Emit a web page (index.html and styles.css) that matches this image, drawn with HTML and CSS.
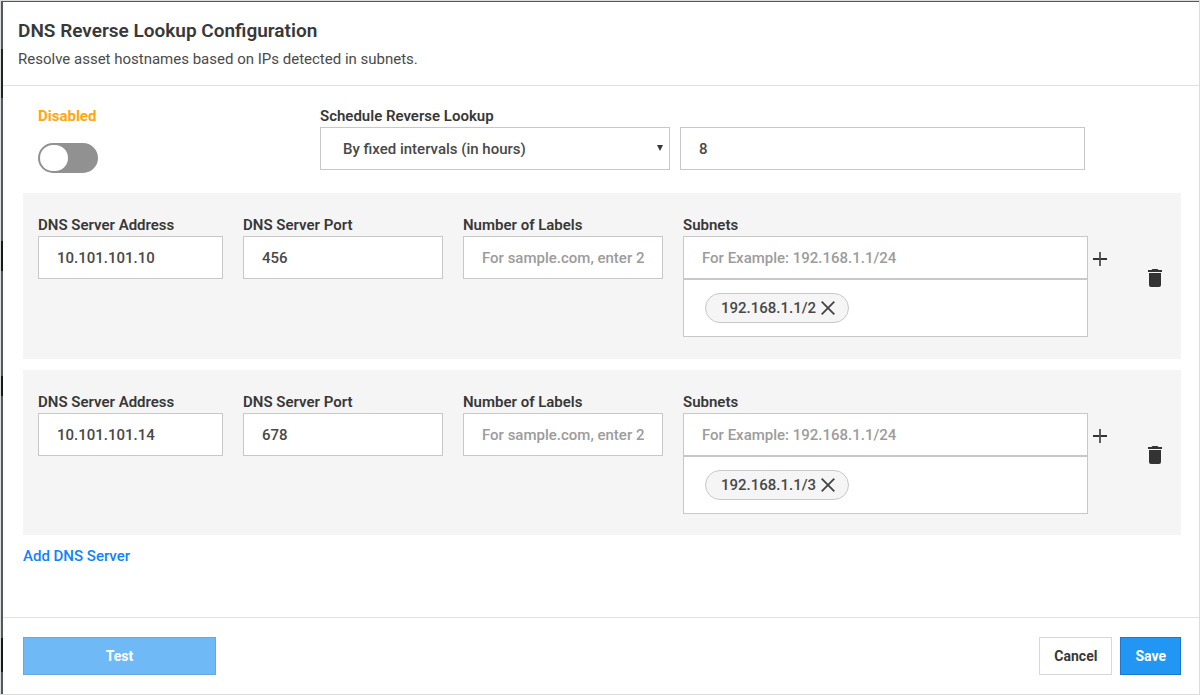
FILE: index.html
```html
<!DOCTYPE html>
<html lang="en">
<head>
<meta charset="utf-8">
<meta name="viewport" content="width=device-width, initial-scale=1">
<title>DNS Reverse Lookup Configuration</title>
<link rel="stylesheet" href="styles.css">
</head>
<body>
<svg class="sprite" aria-hidden="true">
  <symbol id="plus" viewBox="0 0 14 14"><path d="M0 7h14" stroke="#333" stroke-width="2"/><path d="M7 0v14" stroke="#4d4d4d" stroke-width="1.800"/></symbol>
  <symbol id="close" viewBox="0 0 14 14"><path d="M.7.7l12.600 12.600M13.300.7L.7 13.300" stroke="#444" stroke-width="1.800" fill="none"/></symbol>
  <symbol id="trash" viewBox="0 0 14 18"><path d="M1 16a2 2 0 0 0 2 2h8a2 2 0 0 0 2-2V4H1zM14 1h-3.500l-1-1h-5l-1 1H0v2h14z" fill="currentColor"/></symbol>
</svg>
<form class="dialog">
  <header class="header">
    <h1 class="title">DNS Reverse Lookup Configuration</h1>
    <p class="subtitle">Resolve asset hostnames based on IPs detected in subnets.</p>
  </header>
  <main class="content">
    <section class="schedule">
      <div class="status">
        <label class="status-label" for="enabled">Disabled</label>
        <input class="toggle" type="checkbox" role="switch" id="enabled">
      </div>
      <div class="interval">
        <label class="label" for="mode">Schedule Reverse Lookup</label>
        <div class="interval-fields">
          <div class="select-wrap">
            <select class="field select" id="mode"><option>By fixed intervals (in hours)</option></select>
            <svg class="arrow" viewBox="0 0 6 6" aria-hidden="true"><path d="M0 0h6L3 6z" fill="currentColor"/></svg>
          </div>
          <input class="field" type="text" value="8" aria-label="Interval in hours">
        </div>
      </div>
    </section>

    <section class="server">
      <div class="group"><label class="label" for="addr1">DNS Server Address</label><input class="field" id="addr1" type="text" value="10.101.101.10"></div>
      <div class="group"><label class="label" for="port1">DNS Server Port</label><input class="field" id="port1" type="text" value="456"></div>
      <div class="group"><label class="label" for="labels1">Number of Labels</label><input class="field" id="labels1" type="text" placeholder="For sample.com, enter 2"></div>
      <div class="group">
        <label class="label" for="subnets1">Subnets</label><input class="field" id="subnets1" type="text" placeholder="For Example: 192.168.1.1/24">
        <div class="chips"><span class="chip">192.168.1.1/2<button class="icon-button" type="button" aria-label="Remove 192.168.1.1/2"><svg class="icon"><use href="#close"/></svg></button></span></div>
      </div>
      <button class="icon-button add" type="button" aria-label="Add subnet"><svg class="icon"><use href="#plus"/></svg></button>
      <button class="icon-button delete" type="button" aria-label="Delete server"><svg class="icon icon-trash"><use href="#trash"/></svg></button>
    </section>

    <section class="server">
      <div class="group"><label class="label" for="addr2">DNS Server Address</label><input class="field" id="addr2" type="text" value="10.101.101.14"></div>
      <div class="group"><label class="label" for="port2">DNS Server Port</label><input class="field" id="port2" type="text" value="678"></div>
      <div class="group"><label class="label" for="labels2">Number of Labels</label><input class="field" id="labels2" type="text" placeholder="For sample.com, enter 2"></div>
      <div class="group">
        <label class="label" for="subnets2">Subnets</label><input class="field" id="subnets2" type="text" placeholder="For Example: 192.168.1.1/24">
        <div class="chips"><span class="chip">192.168.1.1/3<button class="icon-button" type="button" aria-label="Remove 192.168.1.1/3"><svg class="icon"><use href="#close"/></svg></button></span></div>
      </div>
      <button class="icon-button add" type="button" aria-label="Add subnet"><svg class="icon"><use href="#plus"/></svg></button>
      <button class="icon-button delete" type="button" aria-label="Delete server"><svg class="icon icon-trash"><use href="#trash"/></svg></button>
    </section>

    <a class="add-server" href="#">Add DNS Server</a>
  </main>
  <footer class="footer">
    <button class="button test" type="button">Test</button>
    <button class="button cancel" type="button">Cancel</button>
    <button class="button save" type="submit">Save</button>
  </footer>
</form>
</body>
</html>
```
FILE: styles.css
```css
* { box-sizing: border-box; }

body {
  margin: 0;
  padding: 1px;
  min-height: 100vh;
  display: flex;
  background: #dcdcdc;
  color: #383838;
  font-family: Roboto, "Liberation Sans", sans-serif;
  font-size: 15px;
  line-height: 20px;
}

.sprite { position: absolute; width: 0; height: 0; }

.dialog {
  flex: 1;
  display: flex;
  flex-direction: column;
  background: #fff;
  border-top: 1px solid;
  border-left: 2px solid;
  border-image: linear-gradient(#55585a 48px, #202325 48px, #202325 97px, #55585a 97px, #55585a 240px, #17191b 240px, #17191b 270px, #55585a 270px, #55585a 375px, #17191b 375px, #17191b 395px, #55585a 395px, #55585a 637px, #17191b 637px, #17191b 671px, #55585a 671px) 1 0 0 2;
}

.header {
  padding: 17px 15px 16px;
  border-bottom: 1px solid #e1e1e1;
}

.title {
  margin: 0 0 6px;
  font-size: 19px;
  line-height: 24px;
  font-weight: 600;
}

.subtitle { margin: 0; line-height: 20px; color: #4a4a4a; }

.content { flex: 1; padding: 20px 18px 20px 20px; }

.schedule {
  display: grid;
  grid-template-columns: 272fr 765fr;
  gap: 10px;
  padding: 0 96px 0 15px;
  margin-bottom: 20px;
}

.status { display: flex; flex-direction: column; gap: 17px; }
.status-label { color: #ffa70f; font-weight: 700; }

.toggle {
  appearance: none;
  display: flex;
  align-items: center;
  width: 60px;
  height: 30px;
  margin: 0;
  padding: 2px;
  border-radius: 15px;
  background: #919191;
}
.toggle::before {
  content: "";
  width: 28px;
  height: 26px;
  border-radius: 14px;
  background: #fff;
}
.toggle:checked { justify-content: flex-end; background: #2196f3; }

.label { display: block; font-weight: 600; padding-bottom: 1px; }

.interval-fields { display: grid; grid-template-columns: 350fr 405fr; gap: 10px; }

.select-wrap { position: relative; }
.arrow { position: absolute; right: 7px; top: 18px; width: 6px; height: 6px; }

.field {
  display: block;
  width: 100%;
  height: 43px;
  padding: 0 18px;
  border: 1px solid #c8c8c8;
  border-radius: 0;
  background: #fff;
  color: #484848;
  font: inherit;
  font-weight: 500;
}
.field::placeholder { color: #9c9c9c; opacity: 1; }
.select { appearance: none; padding: 0 22px; }

.server {
  display: grid;
  grid-template-columns: 185fr 200fr 200fr 405fr 20px 14px;
  column-gap: 20px;
  padding: 22px 19px 22px 15px;
  margin-bottom: 11px;
  background: #f5f5f5;
}
.server:last-of-type { padding-bottom: 21px; }

.chips {
  display: flex;
  flex-wrap: wrap;
  gap: 8px;
  padding: 13px 21px;
  background: #fff;
  border: 1px solid #c8c8c8;
}

.chip {
  display: flex;
  align-items: center;
  gap: 5px;
  height: 30px;
  padding: 0 13px 0 15px;
  border: 1px solid #c8c8c8;
  border-radius: 15px;
  background: #f5f5f5;
  color: #484848;
  font-weight: 500;
}

.icon-button {
  display: flex;
  padding: 0;
  border: 0;
  background: none;
  color: #333;
}
.icon { width: 14px; height: 14px; }
.icon-trash { height: 18px; }
.add { margin: 37px 0 0 -15px; align-self: start; }
.delete { margin-top: 54px; align-self: start; }

.add-server {
  color: #0f83ff;
  font-weight: 500;
  text-decoration: none;
}

.footer {
  display: flex;
  gap: 8px;
  padding: 19px 18px 19px 20px;
  border-top: 1px solid #e1e1e1;
}

.button {
  height: 38px;
  padding: 0 14px;
  border: 1px solid #d8d8d8;
  background: #fff;
  color: #383838;
  font: inherit;
  font-size: 14px;
  font-weight: 700;
}
.test {
  width: 193px;
  margin-right: auto;
  background: #6fb9f7;
  border-color: #66a8e2;
  color: #fff;
}
.save { background: #2196f3; border-color: #1b79d0; color: #fff; }
```
